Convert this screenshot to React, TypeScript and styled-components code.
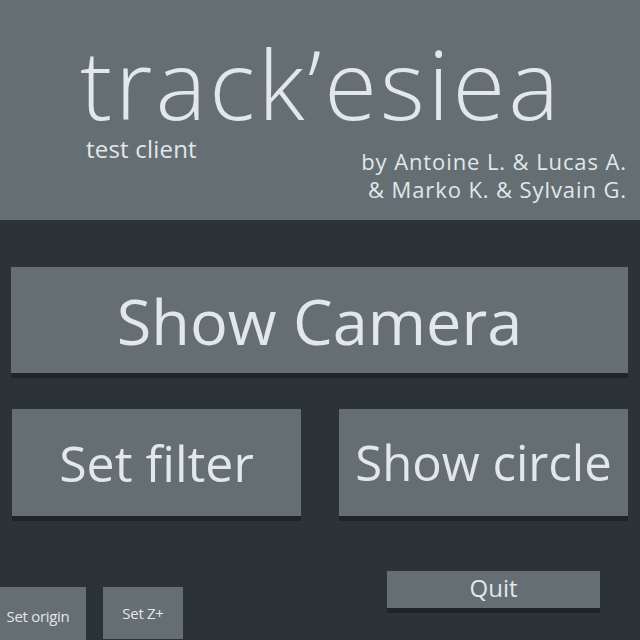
import React from 'react';
import styled, { createGlobalStyle } from 'styled-components';

const GlobalStyle = createGlobalStyle`
  html, body {
    margin: 0;
    padding: 0;
    background: #2c3336;
    overflow: hidden;
  }
  * {
    box-sizing: border-box;
  }
`;

const Page = styled.div`
  width: 640px;
  height: 640px;
  overflow: hidden;
  background: #2c3336;
  font-family: 'Open Sans', 'Noto Sans', sans-serif;
  color: #e1e7ea;
`;

const Header = styled.header`
  height: 220px;
  background: #656e72;
  padding: 35px 13px 0 80px;
  display: flex;
  flex-direction: column;
`;

const Title = styled.h1`
  margin: 0;
  font-size: 96px;
  font-weight: 300;
  line-height: 1;
  letter-spacing: 3px;
`;

const SubRow = styled.div`
  display: flex;
  justify-content: space-between;
  align-items: flex-start;
  margin-top: 6px;
`;

const Subtitle = styled.div`
  margin-left: 6px;
  font-size: 24px;
  line-height: 1;
  letter-spacing: 0.2px;
`;

const Credits = styled.div`
  margin-top: 10px;
  font-size: 22px;
  line-height: 28px;
  letter-spacing: 0.9px;
  text-align: right;
`;

const Content = styled.main`
  padding: 47px 12px 0 11px;
  display: flex;
  flex-direction: column;
  gap: 36px;
`;

const ButtonRow = styled.div`
  display: grid;
  grid-template-columns: 1fr 1fr;
  gap: 38px;
  padding-left: 1px;
`;

const Button = styled.button<{ $height: number; $size: number }>`
  display: flex;
  align-items: center;
  justify-content: center;
  height: ${(p) => p.$height}px;
  border: none;
  margin: 0;
  padding: 0;
  background: #656e72;
  color: #e1e7ea;
  font-family: inherit;
  font-size: ${(p) => p.$size}px;
  line-height: 1;
  box-shadow: 0 5px 0 #1f2427;
  cursor: pointer;
`;

const Footer = styled.footer`
  display: flex;
  align-items: flex-start;
  margin-top: 55px;
`;

const SmallGroup = styled.div`
  display: flex;
  gap: 17px;
  margin-top: 16px;
  margin-left: -10px;
`;

const SmallButton = styled.button<{ $width: number; $height: number }>`
  display: flex;
  align-items: center;
  justify-content: center;
  width: ${(p) => p.$width}px;
  height: ${(p) => p.$height}px;
  border: none;
  margin: 0;
  padding: 0;
  background: #656e72;
  color: #e1e7ea;
  font-family: inherit;
  font-size: 15px;
  letter-spacing: -0.3px;
`;

const QuitButton = styled(Button)`
  width: 213px;
  margin-left: 204px;
  padding-bottom: 4px;
`;

const App: React.FC = () => {
  return (
    <Page>
      <GlobalStyle />
      <Header>
        <Title>track’esiea</Title>
        <SubRow>
          <Subtitle>test client</Subtitle>
          <Credits>
            by Antoine L. &amp; Lucas A.
            <br />
            &amp; Marko K. &amp; Sylvain G.
          </Credits>
        </SubRow>
      </Header>
      <Content>
        <Button $height={106} $size={63}>
          Show Camera
        </Button>
        <ButtonRow>
          <Button $height={107} $size={50}>
            Set filter
          </Button>
          <Button $height={107} $size={49}>
            Show circle
          </Button>
        </ButtonRow>
      </Content>
      <Footer>
        <SmallGroup>
          <SmallButton $width={96} $height={58}>
            Set origin
          </SmallButton>
          <SmallButton $width={80} $height={52}>
            Set Z+
          </SmallButton>
        </SmallGroup>
        <QuitButton $height={37} $size={24}>
          Quit
        </QuitButton>
      </Footer>
    </Page>
  );
};

export default App;
